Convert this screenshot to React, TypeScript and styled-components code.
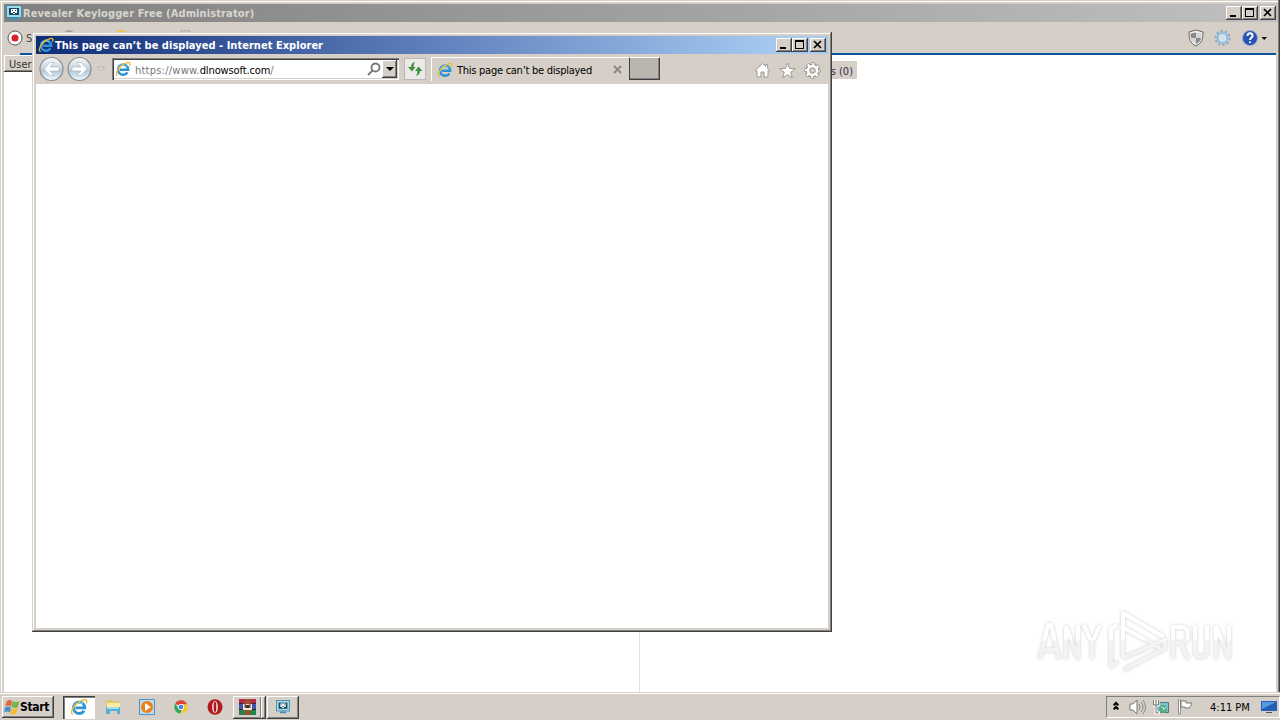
import React from 'react'
import styled, { createGlobalStyle, css } from 'styled-components'

const GlobalStyle = createGlobalStyle`
  * { box-sizing: border-box; }
  body {
    margin: 0;
    overflow: hidden;
    font-family: 'DejaVu Sans Condensed', 'DejaVu Sans', sans-serif;
    font-stretch: condensed;
    font-size: 11px;
    color: #000;
  }
  svg { display: block; flex-shrink: 0; }
`

const face = '#d5cfc7'

const Desktop = styled.div`
  position: relative;
  width: 1280px;
  height: 720px;
  display: flex;
  flex-direction: column;
  background: ${face};
`

const MainWindow = styled.div`
  flex: 1;
  min-height: 0;
  display: flex;
  flex-direction: column;
  padding: 4px 2px 0 4px;
  background: ${face};
  box-shadow: inset -1px 0 #404040, inset -2px 0 #808080, inset 0 1px ${face}, inset 0 2px #fff, inset 1px 0 ${face}, inset 2px 0 #fff;
`

const TitleBar = styled.div<{ $active?: boolean }>`
  height: 18px;
  flex-shrink: 0;
  display: flex;
  align-items: center;
  padding: 0 2px;
  gap: 1px;
  background: ${p => p.$active
    ? 'linear-gradient(90deg, #0f2c76, #5f80bd 50%, #a6caf0 94%)'
    : 'linear-gradient(90deg, #808080, #c0c0c0)'};
`

const TitleText = styled.span<{ $active?: boolean; $spacing: number }>`
  flex: 1;
  padding-top: 1px;
  font-weight: bold;
  white-space: nowrap;
  line-height: 18px;
  letter-spacing: ${p => p.$spacing}px;
  color: ${p => (p.$active ? '#fff' : '#d9d5ce')};
`

const raised = css`
  background: ${face};
  box-shadow: inset -1px -1px #404040, inset 1px 1px #fff, inset -2px -2px #808080;
`

const Caption = styled.span<{ $gap?: boolean }>`
  ${raised}
  width: 16px;
  height: 14px;
  margin-left: ${p => (p.$gap ? 1 : -1)}px;
`

const ToolBar = styled.div`
  height: 31px;
  display: flex;
  align-items: center;
  padding: 0 10px 0 3px;
  flex-shrink: 0;
`

const ToolText = styled.span`
  width: 35px;
  margin-left: 3px;
  padding-top: 1px;
  color: #444;
`

const ToolIcons = styled.div`
  margin-left: auto;
  display: flex;
  align-items: center;
  gap: 9px;
`

const BlueLine = styled.div`
  height: 2px;
  margin: 0 2px 0 16px;
  background: #0d55a0;
  flex-shrink: 0;
`

const Panes = styled.div`
  flex: 1;
  display: flex;
  background: #fff;
  margin-right: 2px;
`

const UserPane = styled.div`
  width: 636px;
  border-right: 1px solid #dedee8;
`

const UserHeader = styled.div`
  ${raised}
  width: 120px;
  height: 17px;
  padding-left: 5px;
  line-height: 19px;
  color: #333;
`

const LogPane = styled.div`
  flex: 1;
  padding: 6px 0 0 100px;
`

const LogTab = styled.div`
  width: 117px;
  height: 18px;
  padding-right: 4px;
  background: ${face};
  text-align: right;
  line-height: 21px;
  color: #35304a;
`

const Popup = styled.div`
  position: absolute;
  left: 32px;
  top: 32px;
  width: 800px;
  height: 600px;
  padding: 4px;
  display: flex;
  flex-direction: column;
  background: ${face};
  box-shadow: inset -1px -1px #404040, inset 1px 1px ${face}, inset -2px -2px #808080, inset 2px 2px #fff;
`

const NavBar = styled.div`
  height: 30px;
  display: flex;
  align-items: center;
  flex-shrink: 0;
  padding-left: 2px;
`

const NavArrow = styled.div`
  width: 28px;
`

const AddressBox = styled.div`
  width: 287px;
  height: 22px;
  margin-left: 5px;
  padding: 2px 2px 2px 3px;
  display: flex;
  align-items: center;
  background: #fff;
  box-shadow: inset 1px 1px #808080, inset 2px 2px #404040, inset -1px -1px #fff, inset -2px -2px ${face};
`

const Address = styled.span`
  flex: 1;
  margin-left: 4px;
  padding-top: 2px;
  color: #777;
  letter-spacing: 0.23px;
`

const Domain = styled.span`
  color: #000;
  letter-spacing: -0.11px;
`

const DropButton = styled.span`
  ${raised}
  width: 15px;
  height: 18px;
  margin-left: 1px;
  display: flex;
  align-items: center;
  justify-content: center;
`

const Refresh = styled.div`
  width: 22px;
  height: 22px;
  margin-left: 5px;
  border: 1px solid #b9b9b9;
  background: #eceae8;
  display: flex;
  align-items: center;
  justify-content: center;
`

const PageTab = styled.div`
  width: 198px;
  height: 24px;
  margin-left: 5px;
  padding: 0 7px 0 5px;
  display: flex;
  align-items: center;
  border-top: 1px solid #fff;
  border-left: 1px solid #fff;
`

const TabTitle = styled.span`
  flex: 1;
  margin-left: 4px;
  padding-top: 1px;
  white-space: nowrap;
  letter-spacing: -0.26px;
`

const NewTab = styled.div`
  width: 31px;
  height: 23px;
  margin-bottom: 1px;
  border: 1px solid #404040;
  border-top-color: #fff;
  background: #bab5ae;
  box-shadow: inset -1px -1px #808080;
`

const NavIcons = styled.div`
  display: flex;
  gap: 8px;
  margin-left: auto;
  padding: 3px 7px 0 0;
`

const Page = styled.div`
  flex: 1;
  background: #fff;
`

const Watermark = styled.div`
  position: absolute;
  left: 1030px;
  top: 601px;
`

const TaskBar = styled.div`
  height: 28px;
  display: flex;
  align-items: center;
  padding: 1px 0 0 2px;
  background: ${face};
  border-top: 1px solid ${face};
  box-shadow: inset 0 1px #fff;
`

const StartButton = styled.div`
  ${raised}
  width: 52px;
  height: 22px;
  display: flex;
  align-items: center;
  padding-left: 2px;
  font-size: 12px;
  font-weight: bold;
  letter-spacing: -0.3px;
`

const TaskItem = styled.div<{ $mode?: 'pressed' | 'raised'; $width: number; $left?: number }>`
  width: ${p => p.$width}px;
  height: 23px;
  margin-left: ${p => p.$left ?? 0}px;
  display: flex;
  align-items: center;
  justify-content: center;
  ${p => p.$mode === 'raised' && raised}
  ${p => p.$mode === 'pressed' && css`
    background: #fff;
    box-shadow: inset 1px 1px #404040, inset 2px 2px #808080, inset -1px -1px #fff;
  `}
`

const Stack = styled.div`
  ${raised}
  width: 5px;
  height: 23px;
  margin-left: -1px;
`

const Tray = styled.div`
  margin-left: auto;
  width: 174px;
  height: 22px;
  padding-left: 5px;
  display: flex;
  align-items: center;
  border: 1px solid #808080;
  border-right-color: #fff;
  border-bottom-color: #fff;
`

const Clock = styled.span`
  width: 42px;
  margin: 0 9px 0 16px;
  padding-top: 1px;
  white-space: nowrap;
`

const IeIcon = ({ size = 16 }: { size?: number }) => (
  <svg width={size} height={size} viewBox="0 0 18 18" fill="none">
    <path d="M14 12.700A5.700 5.700 0 1 1 14.800 9.800H5.500" stroke="#2c93d6" strokeWidth="2.800" />
    <path d="M13 6.200A5.400 5.400 0 0 0 4 8" stroke="#8bd7f4" strokeWidth="1.100" />
    <path d="M3 16.400C-1.500 15 5 4.500 13 2c4-1.200 4.500 1 3.200 3.500" stroke="#e8bd35" strokeWidth="1.500" />
  </svg>
)

const AppIcon = ({ size = 16 }: { size?: number }) => (
  <svg width={size} height={size} viewBox="0 0 16 16">
    <path fill="#3e8ba8" d="M0 0h16v13H0z" />
    <path fill="#a5d8e6" d="M1 1h14v11H1z" />
    <path fill="#174a63" d="M3 3h10v7H3z" />
    <path fill="#fff" d="M5 4h6v4H9v1H7V8H5z" />
    <path fill="#173f53" d="M6 5h1v1H6zM9 5h1v1H9zM7 7h2v1H7z" />
    <path fill="#3c91b0" d="M5 13h6l1 2H4z" />
  </svg>
)

const CaptionButton = ({ kind }: { kind: 'min' | 'max' | 'close' }) => (
  <Caption $gap={kind === 'close'}>
    <svg width="16" height="14" viewBox="0 0 16 14">
      {kind === 'min' && <path d="M4 9h6v2H4z" />}
      {kind === 'max' && <path fillRule="evenodd" d="M3 2h9v9H3zM4 4v6h7V4z" />}
      {kind === 'close' && <path d="M4 3l7 7M11 3l-7 7" stroke="#000" strokeWidth="1.700" />}
    </svg>
  </Caption>
)

const Captions = () => (
  <>
    <CaptionButton kind="min" />
    <CaptionButton kind="max" />
    <CaptionButton kind="close" />
  </>
)

const RoundArrow = ({ forward }: { forward?: boolean }) => (
  <NavArrow>
    <svg width="27" height="26" viewBox="0 0 27 26">
      <defs>
        <linearGradient id="glass" x2="0" y2="1">
          <stop stopColor="#f7f8f9" />
          <stop offset=".48" stopColor="#cbd5de" />
          <stop offset=".55" stopColor="#b0c4d3" />
          <stop offset="1" stopColor="#eefbff" />
        </linearGradient>
      </defs>
      <circle cx="13.5" cy="13" r="11.500" fill="url(#glass)" stroke="#858d95" strokeWidth="1.200" />
      <path
        d="M6 13l6-6.500h4l-4 4.500h9v4h-9l4 4.500h-4z"
        fill="#fff"
        stroke="#9fb0bd"
        strokeWidth=".6"
        transform={forward ? 'translate(27 0) scale(-1 1)' : undefined}
      />
    </svg>
  </NavArrow>
)

const MainIcons = () => (
  <ToolIcons>
    <svg width="18" height="18" viewBox="0 0 18 18">
      <path d="M9 1l7 2c0 7-1 11-7 14C3 14 2 10 2 3z" fill="#eee" stroke="#666" />
      <path d="M9 3.500V9H4L3.500 4.500zM9 9h5c-.6 3-2 5-5 6z" fill="#8b8b8b" />
      <path d="M9 3.500l5.500 1L14 9H9zM9 9H4c.6 3 2 5 5 6z" fill="#d5d5d5" />
    </svg>
    <svg width="18" height="18" viewBox="0 0 18 18" fill="none">
      <circle cx="8.500" cy="9" r="7" stroke="#86a5c2" strokeWidth="1.800" strokeDasharray="2.200 2.200" />
      <circle cx="8.500" cy="9" r="5" fill="#cfe6f7" stroke="#8fbce2" strokeWidth="2.200" />
      <circle cx="8.500" cy="9" r="2.500" fill="#d4dfd9" />
    </svg>
    <svg width="27" height="18" viewBox="0 0 27 18">
      <circle cx="9" cy="9" r="7.500" fill="#2853b5" stroke="#99a7cb" />
      <path d="M6.500 7c0-4 5.500-3.500 5 0-.3 2-2.500 1.500-2.500 4M9 12.500v1.500" fill="none" stroke="#fff" strokeWidth="2" />
      <path d="M20.500 8h5.500l-2.800 3z" />
    </svg>
  </ToolIcons>
)

/* search, open, copy: mostly covered by the browser window */
const LogTools = () => (
  <svg width="200" height="16" viewBox="0 0 200 16">
    <circle cx="8" cy="7" r="6" fill="none" stroke="#999" strokeWidth="1.500" />
    <path d="M56 0h8l2 2h6v11H56z" fill="#e9c95f" />
    <path d="M120 1h9v13h-9z" fill="#eee" stroke="#999" />
  </svg>
)

const BrowserIcons = () => (
  <NavIcons>
    <svg width="17" height="17" viewBox="0 0 17 17" fill="#fff" stroke="#9b9892">
      <path d="M1 8.500l7.500-7 3 2.800V2.500h2v3.800l2.500 2.200-1 1-1-.8V15h-4v-5H7v5H3V8.700l-1 .8z" />
    </svg>
    <svg width="17" height="17" viewBox="0 0 17 17" fill="#fff" stroke="#9b9892">
      <path d="M8.500 1l2 5.400 5.700.3-4.400 3.600 1.500 5.500-4.800-3.100-4.800 3.100 1.500-5.500L.8 6.700l5.700-.3z" />
    </svg>
    <svg width="17" height="17" viewBox="0 0 17 17" fill="none">
      <circle cx="8.500" cy="8.500" r="6.300" stroke="#8c8984" strokeWidth="3.800" strokeDasharray="3.300 1.648" strokeDashoffset="1.600" />
      <circle cx="8.500" cy="8.500" r="5" stroke="#8c8984" strokeWidth="3.500" />
      <circle cx="8.500" cy="8.500" r="6.300" stroke="#fff" strokeWidth="2.600" strokeDasharray="2.100 2.848" strokeDashoffset="1" />
      <circle cx="8.500" cy="8.500" r="4.500" stroke="#fff" strokeWidth="2.600" />
      <circle cx="8.500" cy="8.500" r="2.600" fill={face} stroke="#9b9892" strokeWidth=".8" />
    </svg>
  </NavIcons>
)

const WatermarkLogo = () => (
  <svg width="210" height="76" viewBox="0 0 210 76" style={{ filter: 'drop-shadow(0 0 1.5px #ccc)' }}>
    <defs>
      <linearGradient id="fade" gradientUnits="userSpaceOnUse" x1="0" y1="10" x2="0" y2="66">
        <stop offset=".5" stopColor="#fff" />
        <stop offset=".54" stopColor="#f3f3f3" />
      </linearGradient>
    </defs>
    <g fill="none" stroke="url(#fade)" strokeWidth="4">
      <path d="M10 58l8-34h3l8 34M13 49h13M36 58V25l12 33V24M54 24l8 18 8-18M62 41v17" />
      <path d="M143 58V26h8q7 0 7 8t-7 8h-8M151 42l7 16M165 24v26q0 6 6 6t6-6V24M186 58V25l13 33V24" />
    </g>
    <g fill="none" stroke="url(#fade)" strokeWidth="4" strokeLinejoin="round">
      <path d="M87 24l-6 4v37l7-4M93 56V12l41 24M94 27l36 20M93 57l42-18v8L94 69" />
    </g>
  </svg>
)

const WindowsFlag = () => (
  <svg width="16" height="16" viewBox="0 0 16 16">
    <path d="M3 2q3-2 5 0L7 7.500q-3-2-6 0z" fill="#e2653c" />
    <path d="M8.500 2q3 2 7 0l-1.500 6q-3 2-6.500 0z" fill="#77b350" />
    <path d="M1 8.500q3-2 6 0l-1 5q-3-2-6 0z" fill="#4a90d0" />
    <path d="M7.500 9q3 2 6.500 0l-1.500 5.500q-3 2-6 0z" fill="#f4bb2d" />
  </svg>
)

const Folder = () => (
  <svg width="16" height="16" viewBox="0 0 16 16">
    <path d="M1 3l1-2h5l1 1h6v10H1z" fill="#e0c76c" />
    <path d="M2 4h13v5H2z" fill="#f8eca6" />
    <path d="M1 8h14v7h-3v-3H5v3H1z" fill="#56b1d9" />
    <path d="M2 8h12v2H2z" fill="#a6dbef" />
  </svg>
)

const Player = () => (
  <svg width="16" height="16" viewBox="0 0 16 16">
    <path d="M.5.5h15v15H.5z" fill="#b9dcf2" stroke="#4d94c6" />
    <circle cx="8" cy="8" r="6" fill="#f07d18" />
    <path d="M6 4l6 4-6 4z" fill="#fff" />
  </svg>
)

const Chrome = () => (
  <svg width="14" height="14" viewBox="0 0 16 16">
    <path d="M8 8L1.500 4A7.500 7.500 0 0 1 15 5H8z" fill="#dc4335" />
    <path d="M8 5h7a7.500 7.500 0 0 1-7 10.500L11 9z" fill="#f7c92d" />
    <path d="M1.500 4L5 10l4 1-2 4.500A7.500 7.500 0 0 1 1.500 4z" fill="#34a65a" />
    <circle cx="8" cy="8" r="3.500" fill="#fff" />
    <circle cx="8" cy="8" r="2.700" fill="#4285dc" />
  </svg>
)

const Opera = () => (
  <svg width="16" height="16" viewBox="0 0 16 16">
    <ellipse cx="8" cy="8" rx="7.500" ry="7.700" fill="#b5191e" />
    <ellipse cx="8" cy="8" rx="2.900" ry="6" fill="#f0dfda" />
    <ellipse cx="8" cy="8" rx="1.300" ry="5.200" fill="#a51a1c" />
  </svg>
)

const WinRar = () => (
  <svg width="17" height="16" viewBox="0 0 17 16">
    <path d="M0 0h17v5H0z" fill="#b92a48" />
    <path d="M0 5h17v5H0z" fill="#4255aa" />
    <path d="M0 10h17v6H0z" fill="#258344" />
    <path d="M6 0h5v16H6z" fill="#9b522e" />
    <path d="M4 5h1.500v4H7V5h3v4h1.500V5H13v6H4z" fill="#f2e9d0" />
    <path d="M7 6h3v3H7z" fill="#333" />
    <path d="M0 4.500h4M13 4.500h4M0 10.500h4M13 10.500h4" stroke="#30233e" />
  </svg>
)

const TrayIcons = () => (
  <>
    <svg width="8" height="14" viewBox="0 0 8 14" fill="none" stroke="#000" strokeWidth="1.300">
      <path d="M1.500 5L4 2.500 6.500 5M1.500 9L4 6.500 6.500 9" />
      <path d="M2 5.500l2-2 2 2M2 9.500l2-2 2 2" />
    </svg>
    <svg width="17" height="16" viewBox="0 0 17 16" fill="#fff" stroke="#777" style={{ marginLeft: 9 }}>
      <path d="M1 5h3l4-4v14l-4-4H1z" />
      <path d="M10 5q2 3 0 6M12 3q4 5 0 10M14 1q5 7 0 14" fill="none" strokeWidth=".8" />
    </svg>
    <svg width="17" height="16" viewBox="0 0 17 16" style={{ marginLeft: 7 }}>
      <path d="M4.500 3.500h11v10h-11z" fill="#79c3cb" stroke="#55747b" />
      <circle cx="10" cy="10" r="4" fill="#55aa88" />
      <path d="M8 8q3 0 3 3l2-3" fill="none" stroke="#c9eee4" />
      <path d="M1 1v5h4V1M3 6v8h4" fill="none" stroke="#fff" strokeWidth="3" />
      <path d="M.5 1v5h5V1M3 1v13h3" fill="none" stroke="#555" strokeWidth=".8" />
    </svg>
    <svg width="17" height="16" viewBox="0 0 17 16" fill="#fff" stroke="#777" style={{ marginLeft: 7 }}>
      <path d="M1.500 1h2v14h-2z" strokeWidth=".8" />
      <path d="M4 2h5v2h6l-2.500 5H8V8H4z" />
    </svg>
  </>
)

export default function App() {
  return (
    <>
      <GlobalStyle />
      <Desktop>
        <MainWindow>
          <TitleBar>
            <AppIcon />
            <TitleText $spacing={0.11}>Revealer Keylogger Free (Administrator)</TitleText>
            <Captions />
          </TitleBar>
          <ToolBar>
            <svg width="16" height="16" viewBox="0 0 16 16">
              <circle cx="8" cy="8" r="7" fill="#fff" stroke="#555" />
              <circle cx="8" cy="8" r="3.500" fill="#dc2027" />
            </svg>
            <ToolText>Start</ToolText>
            <LogTools />
            <MainIcons />
          </ToolBar>
          <BlueLine />
          <Panes>
            <UserPane>
              <UserHeader>Users</UserHeader>
            </UserPane>
            <LogPane>
              <LogTab>Screenshots (0)</LogTab>
            </LogPane>
          </Panes>
        </MainWindow>

        <Watermark>
          <WatermarkLogo />
        </Watermark>

        <TaskBar>
          <StartButton>
            <WindowsFlag />
            Start
          </StartButton>
          <TaskItem $mode="pressed" $width={32} $left={9}><IeIcon size={18} /></TaskItem>
          <TaskItem $width={34} $left={1}><Folder /></TaskItem>
          <TaskItem $width={34}><Player /></TaskItem>
          <TaskItem $width={34}><Chrome /></TaskItem>
          <TaskItem $width={33}><Opera /></TaskItem>
          <TaskItem $mode="raised" $width={29} $left={2}><WinRar /></TaskItem>
          <Stack />
          <TaskItem $mode="raised" $width={32} $left={1}><AppIcon size={14} /></TaskItem>
          <Tray>
            <TrayIcons />
            <Clock>4:11 PM</Clock>
            <svg width="16" height="14" viewBox="0 0 16 14">
              <path d="M0 1h16v10H0z" fill="#245fb8" />
              <path d="M1 2h14L1 9z" fill="#5b99df" />
              <path d="M5 12h6v1H5z" fill="#555" />
            </svg>
          </Tray>
        </TaskBar>

        <Popup>
          <TitleBar $active>
            <IeIcon />
            <TitleText $active $spacing={0.03}>This page can’t be displayed - Internet Explorer</TitleText>
            <Captions />
          </TitleBar>
          <NavBar>
            <RoundArrow />
            <RoundArrow forward />
            <svg width="12" height="8" viewBox="0 0 12 8" style={{ marginLeft: 1 }}>
              <path d="M2 2h8L6 6z" fill="#dedad4" stroke="#b5b1aa" />
            </svg>
            <AddressBox>
              <IeIcon />
              <Address>https://www.<Domain>dlnowsoft.com</Domain>/</Address>
              <svg width="14" height="14" viewBox="0 0 14 14" fill="none" stroke="#777" strokeWidth="1.800">
                <circle cx="8.500" cy="5.500" r="4" />
                <path d="M5.500 8.500L1 13" />
              </svg>
              <DropButton>
                <svg width="8" height="4" viewBox="0 0 8 4"><path d="M0 0h8L4 4z" /></svg>
              </DropButton>
            </AddressBox>
            <Refresh>
              <svg width="16" height="16" viewBox="0 0 16 16" fill="#3f9140">
                <path d="M8 1Q4 2 4 6H1l4 4.500L8.500 6H6.500Q6.500 3 8 1z" />
                <path d="M9 15q4-1 4-5h2.500L11.500 5.500 8 10h2.500q0 3-1.500 5z" />
              </svg>
            </Refresh>
            <PageTab>
              <IeIcon />
              <TabTitle>This page can’t be displayed</TabTitle>
              <svg width="9" height="9" viewBox="0 0 9 9" stroke="#8b8781" strokeWidth="1.800">
                <path d="M1 1l7 7M8 1L1 8" />
              </svg>
            </PageTab>
            <NewTab />
            <BrowserIcons />
          </NavBar>
          <Page />
        </Popup>
      </Desktop>
    </>
  )
}
